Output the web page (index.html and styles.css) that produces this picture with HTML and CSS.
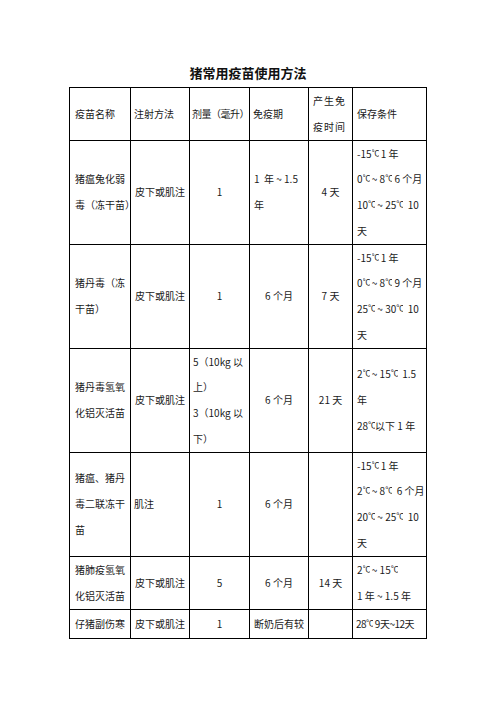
FILE: index.html
```html
<!DOCTYPE html>
<html lang="zh">
<head>
<meta charset="utf-8">
<title>猪常用疫苗使用方法</title>
<link rel="stylesheet" href="styles.css">
</head>
<body>
<div class="page">
  <h1 class="title">猪常用疫苗使用方法</h1>
  <table class="vac">
    <colgroup>
      <col class="c1"><col class="c2"><col class="c3"><col class="c4"><col class="c5"><col class="c6">
    </colgroup>
    <tr class="h52">
      <td class="l p5">疫苗名称</td>
      <td class="l p3">注射方法</td>
      <td class="l p2 tight">剂量（毫升）</td>
      <td class="l p3">免疫期</td>
      <td class="l p4 sp">产生免<br>疫时间</td>
      <td class="l p4">保存条件</td>
    </tr>
    <tr class="h104">
      <td class="l p5">猪瘟兔化弱<br>毒（冻干苗）</td>
      <td class="c">皮下或肌注</td>
      <td class="c">1</td>
      <td class="l p4">1&nbsp; 年 ~ 1.5<br>年</td>
      <td class="c">4 天</td>
      <td class="l p4">-15<span class="dg">℃</span> 1 年<br>0<span class="dg">℃</span> ~ 8<span class="dg">℃</span> 6 个月<br>10<span class="dg">℃</span> ~ 25<span class="dg">℃</span>&nbsp; 10<br>天</td>
    </tr>
    <tr class="h104">
      <td class="l p5">猪丹毒（冻<br>干苗）</td>
      <td class="c">皮下或肌注</td>
      <td class="c">1</td>
      <td class="c">6 个月</td>
      <td class="c">7 天</td>
      <td class="l p4">-15<span class="dg">℃</span> 1 年<br>0<span class="dg">℃</span> ~ 8<span class="dg">℃</span> 9 个月<br>25<span class="dg">℃</span> ~ 30<span class="dg">℃</span>&nbsp; 10<br>天</td>
    </tr>
    <tr class="h105">
      <td class="l p5">猪丹毒氢氧<br>化铝灭活苗</td>
      <td class="c">皮下或肌注</td>
      <td class="l p3">5（10kg 以<br>上）<br>3（10kg 以<br>下）</td>
      <td class="c">6 个月</td>
      <td class="c">21 天</td>
      <td class="l p4">2<span class="dg">℃</span> ~ 15<span class="dg">℃</span>&nbsp; 1.5<br>年<br>28<span class="dg">℃</span>以下 1 年</td>
    </tr>
    <tr class="h104">
      <td class="l p5">猪瘟、猪丹<br>毒二联冻干<br>苗</td>
      <td class="l p3">肌注</td>
      <td class="c">1</td>
      <td class="c">6 个月</td>
      <td class="c"></td>
      <td class="l p4">-15<span class="dg">℃</span> 1 年<br>2<span class="dg">℃</span> ~ 8<span class="dg">℃</span>&nbsp; 6 个月<br>20<span class="dg">℃</span> ~ 25<span class="dg">℃</span>&nbsp; 10<br>天</td>
    </tr>
    <tr class="h54">
      <td class="l p5">猪肺疫氢氧<br>化铝灭活苗</td>
      <td class="c">皮下或肌注</td>
      <td class="c">5</td>
      <td class="c">6 个月</td>
      <td class="c">14 天</td>
      <td class="l p4">2<span class="dg">℃</span> ~ 15<span class="dg">℃</span><br>1 年 ~ 1.5 年</td>
    </tr>
    <tr class="h30">
      <td class="l p5">仔猪副伤寒</td>
      <td class="c">皮下或肌注</td>
      <td class="c">1</td>
      <td class="l p4">断奶后有较</td>
      <td class="c"></td>
      <td class="l p3 tight">28<span class="dg">℃</span> 9天~12天</td>
    </tr>
  </table>
</div>
</body>
</html>
```
FILE: styles.css
```css
html, body {
  margin: 0;
  padding: 0;
  background: #fff;
}
body {
  font-family: "Noto Sans CJK SC", "Noto Sans", sans-serif;
  color: #1a1a1a;
}
.page {
  width: 496px;
  padding-top: 64px;
}
.title {
  margin: 0 0 5px 0;
  text-align: center;
  font-size: 13px;
  line-height: 18px;
  font-weight: bold;
  color: #111;
}
.vac {
  margin: 0 auto;
  border-collapse: collapse;
  table-layout: fixed;
  width: 357px;
  font-size: 10px;
  line-height: 25.75px;
}
.c1 { width: 61px; }
.c2 { width: 59px; }
.c3 { width: 60px; }
.c4 { width: 59px; }
.c5 { width: 44px; }
.c6 { width: 74px; }
.vac td {
  border: 1px solid #000;
  padding: 0;
  vertical-align: middle;
  white-space: nowrap;
  overflow: visible;
}
.vac td.l { text-align: left; }
.vac td.c { text-align: center; }
.vac td.p2 { padding-left: 2px; }
.vac td.p3 { padding-left: 3px; }
.vac td.p4 { padding-left: 4px; }
.vac td.p5 { padding-left: 5px; }
.tight { letter-spacing: -0.5px; }
.sp { letter-spacing: 1px; }
.dg {
  display: inline-block;
  width: 7px;
  overflow: hidden;
  font-size: 8px;
  line-height: 10px;
  letter-spacing: -2px;
  vertical-align: baseline;
}
.h52 { height: 51px; }
.h54 { height: 53px; }
.h104 { height: 103px; }
.h105 { height: 104px; }
.h30 { height: 29px; }
```
